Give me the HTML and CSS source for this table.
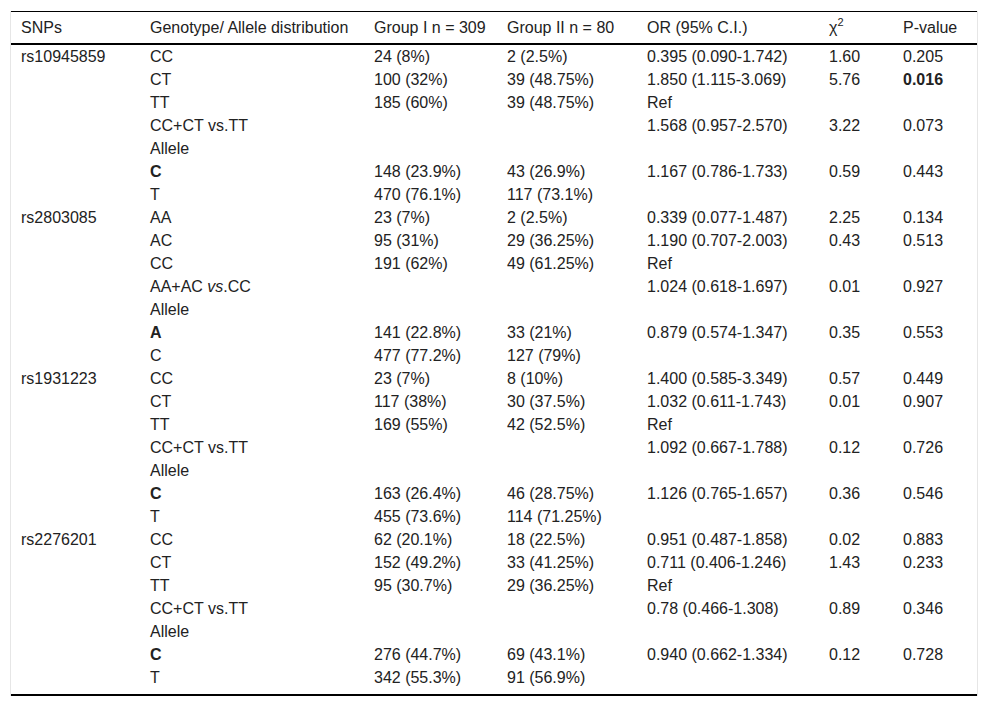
FILE: index.html
```html
<!DOCTYPE html>
<html>
<head>
<meta charset="utf-8">
<link rel="stylesheet" href="styles.css">
</head>
<body>
<div class="wrap">
<table class="data">
<colgroup>
<col class="c1"><col class="c2"><col class="c3"><col class="c4"><col class="c5"><col class="c6"><col class="c7">
</colgroup>
<thead>
<tr><th>SNPs</th><th>Genotype/ Allele distribution</th><th>Group I n = 309</th><th>Group II n = 80</th><th>OR (95% C.I.)</th><th>χ<sup>2</sup></th><th>P-value</th></tr>
</thead>
<tbody>
<tr><td>rs10945859</td><td>CC</td><td>24 (8%)</td><td>2 (2.5%)</td><td>0.395 (0.090-1.742)</td><td>1.60</td><td>0.205</td></tr>
<tr><td></td><td>CT</td><td>100 (32%)</td><td>39 (48.75%)</td><td>1.850 (1.115-3.069)</td><td>5.76</td><td><b>0.016</b></td></tr>
<tr><td></td><td>TT</td><td>185 (60%)</td><td>39 (48.75%)</td><td>Ref</td><td></td><td></td></tr>
<tr><td></td><td>CC+CT vs.TT</td><td></td><td></td><td>1.568 (0.957-2.570)</td><td>3.22</td><td>0.073</td></tr>
<tr><td></td><td>Allele</td><td></td><td></td><td></td><td></td><td></td></tr>
<tr><td></td><td><b>C</b></td><td>148 (23.9%)</td><td>43 (26.9%)</td><td>1.167 (0.786-1.733)</td><td>0.59</td><td>0.443</td></tr>
<tr><td></td><td>T</td><td>470 (76.1%)</td><td>117 (73.1%)</td><td></td><td></td><td></td></tr>
<tr><td>rs2803085</td><td>AA</td><td>23 (7%)</td><td>2 (2.5%)</td><td>0.339 (0.077-1.487)</td><td>2.25</td><td>0.134</td></tr>
<tr><td></td><td>AC</td><td>95 (31%)</td><td>29 (36.25%)</td><td>1.190 (0.707-2.003)</td><td>0.43</td><td>0.513</td></tr>
<tr><td></td><td>CC</td><td>191 (62%)</td><td>49 (61.25%)</td><td>Ref</td><td></td><td></td></tr>
<tr><td></td><td>AA+AC <i>vs</i>.CC</td><td></td><td></td><td>1.024 (0.618-1.697)</td><td>0.01</td><td>0.927</td></tr>
<tr><td></td><td>Allele</td><td></td><td></td><td></td><td></td><td></td></tr>
<tr><td></td><td><b>A</b></td><td>141 (22.8%)</td><td>33 (21%)</td><td>0.879 (0.574-1.347)</td><td>0.35</td><td>0.553</td></tr>
<tr><td></td><td>C</td><td>477 (77.2%)</td><td>127 (79%)</td><td></td><td></td><td></td></tr>
<tr><td>rs1931223</td><td>CC</td><td>23 (7%)</td><td>8 (10%)</td><td>1.400 (0.585-3.349)</td><td>0.57</td><td>0.449</td></tr>
<tr><td></td><td>CT</td><td>117 (38%)</td><td>30 (37.5%)</td><td>1.032 (0.611-1.743)</td><td>0.01</td><td>0.907</td></tr>
<tr><td></td><td>TT</td><td>169 (55%)</td><td>42 (52.5%)</td><td>Ref</td><td></td><td></td></tr>
<tr><td></td><td>CC+CT vs.TT</td><td></td><td></td><td>1.092 (0.667-1.788)</td><td>0.12</td><td>0.726</td></tr>
<tr><td></td><td>Allele</td><td></td><td></td><td></td><td></td><td></td></tr>
<tr><td></td><td><b>C</b></td><td>163 (26.4%)</td><td>46 (28.75%)</td><td>1.126 (0.765-1.657)</td><td>0.36</td><td>0.546</td></tr>
<tr><td></td><td>T</td><td>455 (73.6%)</td><td>114 (71.25%)</td><td></td><td></td><td></td></tr>
<tr><td>rs2276201</td><td>CC</td><td>62 (20.1%)</td><td>18 (22.5%)</td><td>0.951 (0.487-1.858)</td><td>0.02</td><td>0.883</td></tr>
<tr><td></td><td>CT</td><td>152 (49.2%)</td><td>33 (41.25%)</td><td>0.711 (0.406-1.246)</td><td>1.43</td><td>0.233</td></tr>
<tr><td></td><td>TT</td><td>95 (30.7%)</td><td>29 (36.25%)</td><td>Ref</td><td></td><td></td></tr>
<tr><td></td><td>CC+CT vs.TT</td><td></td><td></td><td>0.78 (0.466-1.308)</td><td>0.89</td><td>0.346</td></tr>
<tr><td></td><td>Allele</td><td></td><td></td><td></td><td></td><td></td></tr>
<tr><td></td><td><b>C</b></td><td>276 (44.7%)</td><td>69 (43.1%)</td><td>0.940 (0.662-1.334)</td><td>0.12</td><td>0.728</td></tr>
<tr class="last"><td></td><td>T</td><td>342 (55.3%)</td><td>91 (56.9%)</td><td></td><td></td><td></td></tr>
</tbody>
</table>
</div>
</body>
</html>
```
FILE: styles.css
```css
html, body {
  margin: 0;
  padding: 0;
  background: #fff;
}
body {
  padding: 11px 10px 0 10px;
  font-family: "Liberation Sans", Arial, sans-serif;
  font-size: 16px;
  color: #222;
}
.wrap {
  width: 966px;
  border-left: 1px solid #e6e6e6;
  border-right: 1px solid #e6e6e6;
}
.data {
  width: 966px;
  border-collapse: collapse;
  table-layout: fixed;
  border-top: 1px solid #000;
  border-bottom: 2px solid #000;
}
.c1 { width: 129px; }
.c2 { width: 224px; }
.c3 { width: 133px; }
.c4 { width: 140px; }
.c5 { width: 182px; }
.c6 { width: 74px; }
.c7 { width: 84px; }
th {
  text-align: left;
  font-weight: normal;
  padding: 7px 10px 7px 10px;
  line-height: 17px;
  border-bottom: 2px solid #000;
  white-space: nowrap;
}
th sup {
  font-size: 11px;
  line-height: 0;
  vertical-align: 7px;
}
td {
  padding: 3px 10px;
  line-height: 17px;
  height: 17px;
  white-space: nowrap;
  vertical-align: top;
}
tr.last td {
  padding-bottom: 8px;
}
```
